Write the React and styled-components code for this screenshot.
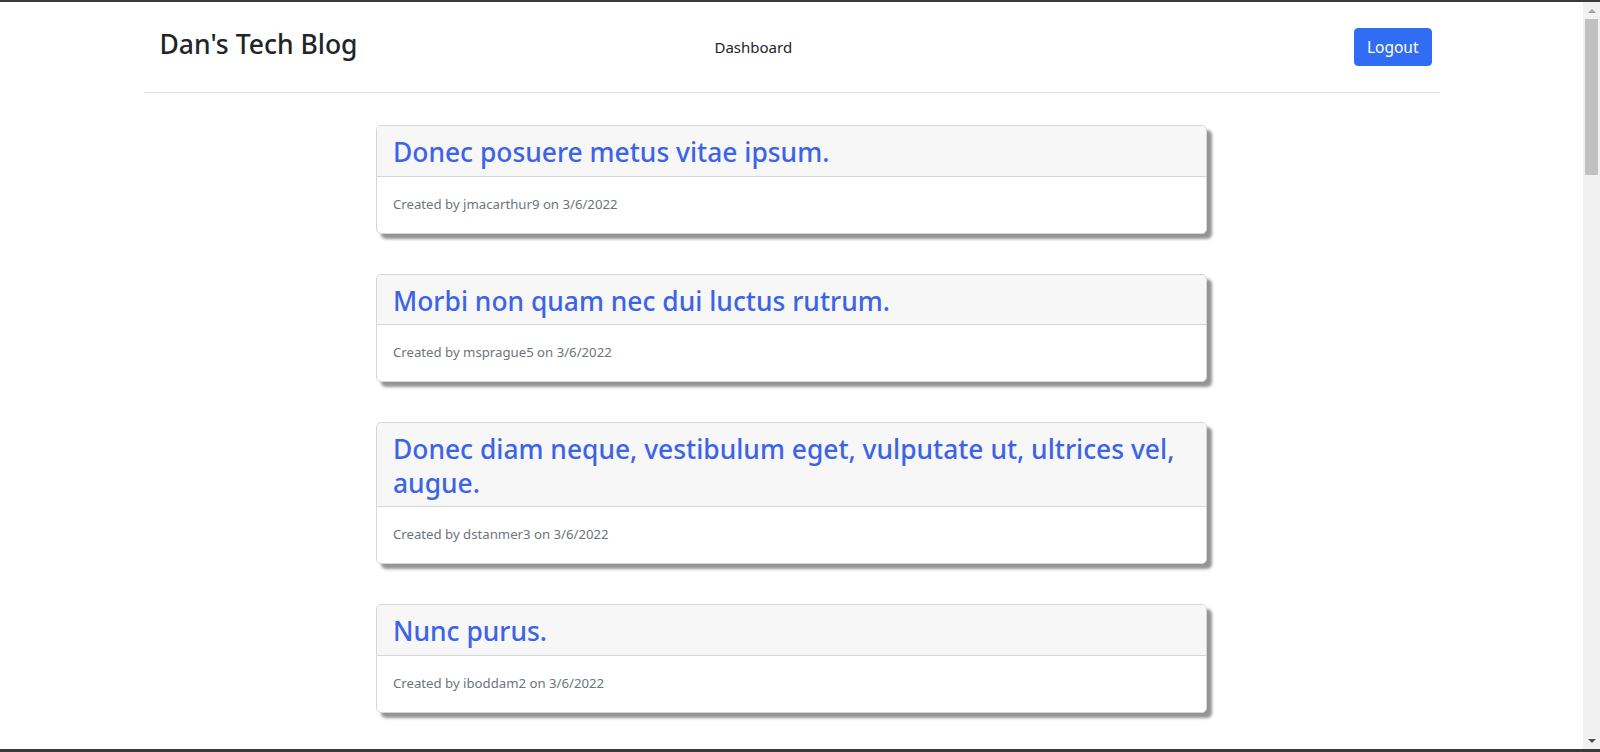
import styled, { createGlobalStyle } from 'styled-components'

const GlobalStyle = createGlobalStyle`
 *, *::before, *::after {
  box-sizing: border-box;
 }
 body {
  margin: 0;
  background: #fff;
  color: #212529;
  font-family: 'Noto Sans', 'Open Sans', sans-serif;
 }
`

const Shell = styled.div`
 display: flex;
 height: 100vh;
 overflow: hidden;
`

const Page = styled.div`
 flex: 1;
 min-width: 0;
`

const Frame = styled.div`
 position: fixed;
 inset: 0;
 pointer-events: none;
 border-top: 2px solid #3a3a3a;
 border-bottom: 3px solid #3a3a3a;
`

/* fake window scrollbar, drawn like the screenshot's one */
const Scrollbar = styled.div`
 width: 17px;
 background: #f1f1f1;
 display: flex;
 flex-direction: column;
 padding: 2px 0 3px;
`

const ScrollArrow = styled.div`
 height: 17px;
 display: flex;
 align-items: center;
 justify-content: center;
 &::after {
  content: '';
  border-left: 4px solid transparent;
  border-right: 4px solid transparent;
  ${(p) =>
   p.$down
    ? 'border-top: 4px solid #505050;'
    : 'border-bottom: 4px solid #a3a3a3;'}
 }
`

const ScrollTrack = styled.div`
 flex: 1;
 padding: 0 2px;
`

const ScrollThumb = styled.div`
 height: 156px;
 background: #c1c1c1;
`

const Container = styled.div`
 max-width: 1320px;
 margin: 0 auto;
 padding: 0 12px;
`

const Header = styled.header`
 height: 93px;
 display: grid;
 grid-template-columns: 555px 1fr auto;
 align-items: center;
 padding: 2px 8px 0 16px;
 border-bottom: 1px solid #dee2e6;
 margin-bottom: 32px;
`

const Brand = styled.a`
 font-size: 26.5px;
 font-weight: 500;
 color: #212529;
 text-decoration: none;
 margin-top: -6px;
`

const NavLink = styled.a`
 font-size: 15px;
 color: #212529;
 text-decoration: none;
`

const LogoutButton = styled.button`
 font-family: inherit;
 font-size: 15.5px;
 line-height: 24px;
 padding: 6px 12px;
 height: 38px;
 color: #fff;
 background: #316cf4;
 border: 1px solid #316cf4;
 border-radius: 4px;
 cursor: pointer;
 &:hover {
  background: #0b5ed7;
 }
`

const PostList = styled.main`
 display: flex;
 flex-direction: column;
 align-items: center;
 gap: 40px;
`

const Card = styled.article`
 width: 831px;
 border: 1px solid #d6d6d6;
 border-radius: 5px;
 background: #fff;
 box-shadow: 5px 5px 3px rgba(0, 0, 0, 0.42);
`

const CardHeader = styled.div`
 background: #f7f7f7;
 padding: 10px 16px 6px;
 border-bottom: 1px solid #d6d6d6;
 border-radius: 5px 5px 0 0;
`

const PostTitle = styled.h3`
 margin: 0;
 font-size: 26.4px;
 font-weight: 500;
 line-height: 33.6px;
 color: #3d64e6;
`

const CardBody = styled.div`
 padding: 17px 16px 18px;
 font-size: 13.2px;
 line-height: 21px;
 color: #6c757d;
`

const posts = [
 ['Donec posuere metus vitae ipsum.', 'jmacarthur9'],
 ['Morbi non quam nec dui luctus rutrum.', 'msprague5'],
 ['Donec diam neque, vestibulum eget, vulputate ut, ultrices vel, augue.', 'dstanmer3'],
 ['Nunc purus.', 'iboddam2'],
]

function PostCard({ title, author }) {
 return (
  <Card>
   <CardHeader>
    <PostTitle>{title}</PostTitle>
   </CardHeader>
   <CardBody>Created by {author} on 3/6/2022</CardBody>
  </Card>
 )
}

export default function App() {
 return (
  <>
   <GlobalStyle />
   <Shell>
    <Page>
     <Container>
      <Header>
       <Brand href='#'>Dan's Tech Blog</Brand>
       <div>
        <NavLink href='#'>Dashboard</NavLink>
       </div>
       <LogoutButton>Logout</LogoutButton>
      </Header>
     </Container>
     <PostList>
      {posts.map(([title, author], i) => (
       <PostCard key={i} title={title} author={author} />
      ))}
     </PostList>
    </Page>
    <Scrollbar>
     <ScrollArrow />
     <ScrollTrack>
      <ScrollThumb />
     </ScrollTrack>
     <ScrollArrow $down />
    </Scrollbar>
   </Shell>
   <Frame />
  </>
 )
}
